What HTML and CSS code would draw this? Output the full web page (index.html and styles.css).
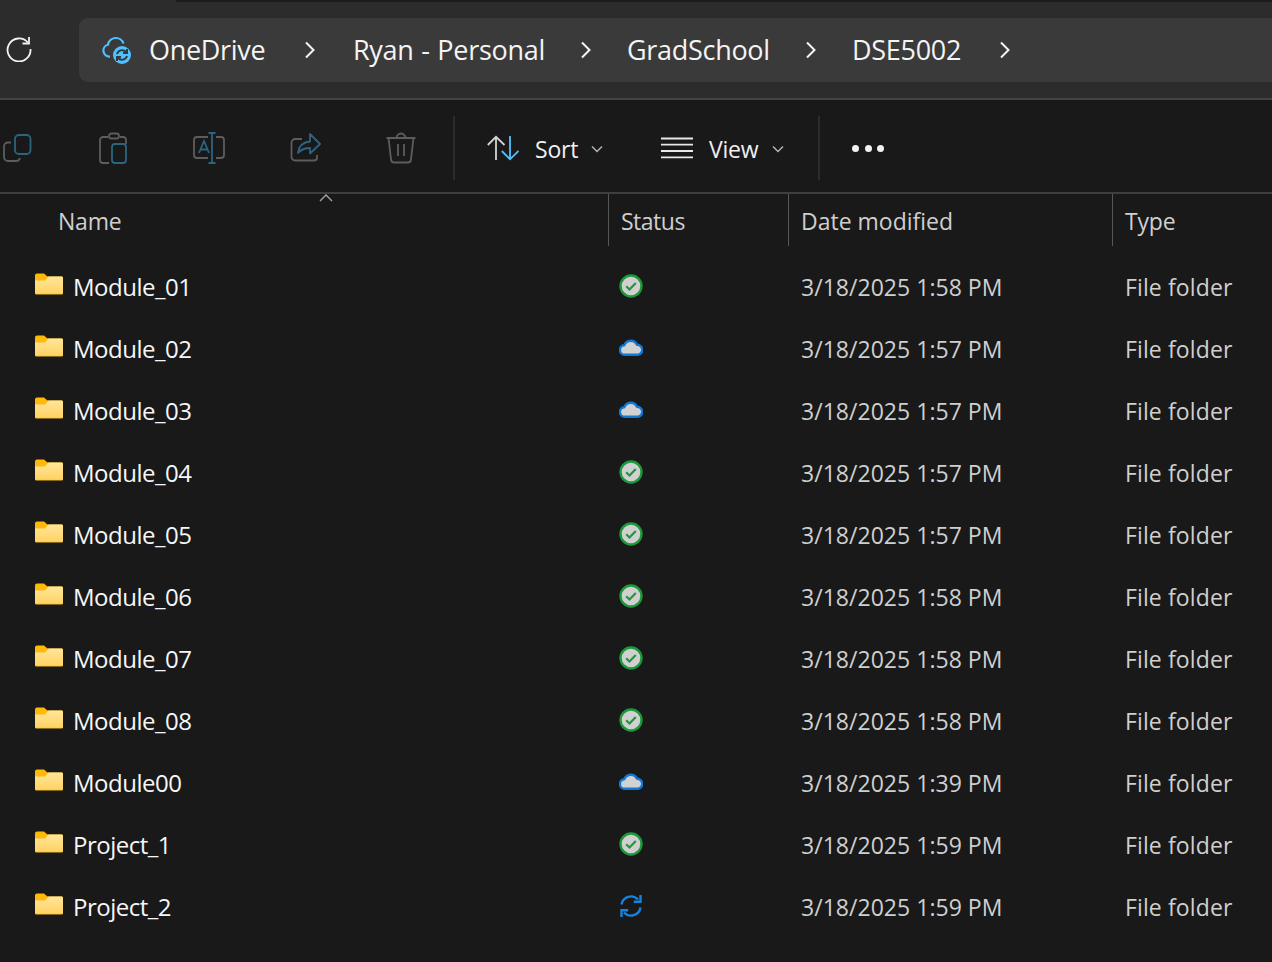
FILE: index.html
```html
<!DOCTYPE html>
<html lang="en">
<head>
<meta charset="utf-8">
<title>DSE5002 - File Explorer</title>
<link rel="stylesheet" href="styles.css">
</head>
<body>
<svg class="defs" width="0" height="0" aria-hidden="true">
  <symbol id="folder" viewBox="0 0 28 22">
    <path d="M0 2.500A2 2 0 0 1 2 .5h7l4 3.500h13.500a1.500 1.500 0 0 1 1.500 1.500v2H0z" fill="#ffb900"/>
    <rect y="3.500" width="28" height="18" rx="1.300" fill="#fdb813"/>
    <path d="M0 7.500 10 7.500 13.500 3.500H26.500a1.500 1.500 0 0 1 1.500 1.500V19.500a1.300 1.300 0 0 1-1.300 1.300H1.300A1.300 1.300 0 0 1 0 19.500z" fill="url(#fg)"/>
    <linearGradient id="fg" x1="0" y1="0" x2="0" y2="1"><stop offset="0" stop-color="#ffe69a"/><stop offset="1" stop-color="#ffd362"/></linearGradient>
  </symbol>
  <symbol id="ok" viewBox="0 0 24 24">
    <circle cx="12" cy="12" r="10.500" fill="#d0d0d0" stroke="#1c9a3a" stroke-width="2.400"/>
    <path d="M7.200 12.300l3.300 3.200 6.300-6.400" fill="none" stroke="#1c9a3a" stroke-width="2.200"/>
  </symbol>
  <symbol id="cloud" viewBox="0 0 24 18">
    <path d="M6 16.800A4.800 4.800 0 0 1 5.400 7.200 6.800 6.800 0 0 1 18 6.800 5 5 0 0 1 18.500 16.800z" fill="#d2d2d2" stroke="#0f78d8" stroke-width="2.400" stroke-linejoin="round"/>
  </symbol>
  <symbol id="sync" viewBox="0 0 24 24">
    <g fill="none" stroke="#1683e0" stroke-width="2.400">
      <path d="M2.500 10.500A9.600 9.600 0 0 1 19 5.500"/>
      <path d="M21.500 1v6.700h-6.700"/>
      <path d="M21.500 13.500A9.600 9.600 0 0 1 5 18.500"/>
      <path d="M2.500 23v-6.700h6.700"/>
    </g>
  </symbol>
  <symbol id="chev" viewBox="0 0 12 18">
    <path d="M2 1.500 9.500 9 2 16.500" fill="none" stroke="#f4f4f4" stroke-width="2"/>
  </symbol>
  <symbol id="caret" viewBox="0 0 12 8">
    <path d="M1 1.500 6 6.500 11 1.500" fill="none" stroke="#b5b5b5" stroke-width="1.500"/>
  </symbol>
</svg>

<div class="app">
  <header class="navbar">
    <div class="topstrip"></div>
    <div class="navrow">
      <svg class="refresh" viewBox="0 0 26 26" width="26" height="26">
        <path d="M21.800 6.500A11.500 11.500 0 1 0 24.500 13" fill="none" stroke="#f2f2f2" stroke-width="1.800"/>
        <path d="M23 1v6.500h-6.500" fill="none" stroke="#f2f2f2" stroke-width="1.800"/>
      </svg>
      <nav class="address">
        <svg class="od" viewBox="0 0 30 28" width="30" height="28">
          <path d="M8 20.500A6 6 0 0 1 6 8.700 8 8 0 0 1 21.500 7.500" fill="none" stroke="#4fc1ff" stroke-width="2.200"/>
          <circle cx="20" cy="19" r="9" fill="#4fc1ff"/>
          <path d="M15 18A5.300 5.300 0 0 1 24 16M25 20A5.300 5.300 0 0 1 16 22" fill="none" stroke="#2f3a42" stroke-width="2"/>
          <path d="M25 13v4h-4M15 25v-4h4" fill="none" stroke="#2f3a42" stroke-width="2"/>
        </svg>
        <span class="crumb c-one">OneDrive</span>
        <svg class="chev"><use href="#chev"/></svg>
        <span class="crumb c-two">Ryan - Personal</span>
        <svg class="chev"><use href="#chev"/></svg>
        <span class="crumb c-three">GradSchool</span>
        <svg class="chev"><use href="#chev"/></svg>
        <span class="crumb c-four">DSE5002</span>
        <svg class="chev"><use href="#chev"/></svg>
      </nav>
    </div>
  </header>

  <section class="toolbar">
    <div class="tools">
      <svg class="tool" viewBox="0 0 32 32">
        <path d="M10 10.500H7a4 4 0 0 0-4 4V25a4 4 0 0 0 4 4h8a4 4 0 0 0 4-3" fill="none" stroke="#5d5d5d" stroke-width="1.800"/>
        <rect x="14" y="3" width="15.500" height="19" rx="4" fill="none" stroke="#2b6580" stroke-width="1.800"/>
      </svg>
      <svg class="tool" viewBox="-1 0 32 32">
        <path d="M10 5H5a3 3 0 0 0-3 3v20a3 3 0 0 0 3 3h6M22 5h3a3 3 0 0 1 3 3v4" fill="none" stroke="#5d5d5d" stroke-width="1.800"/>
        <rect x="11" y="1.500" width="10" height="5" rx="2.500" fill="none" stroke="#5d5d5d" stroke-width="1.800"/>
        <rect x="14" y="12" width="14" height="19" rx="3" fill="none" stroke="#2b6580" stroke-width="1.800"/>
      </svg>
      <svg class="tool" viewBox="0 0 32 32">
        <path d="M15 5H4a3 3 0 0 0-3 3v15a3 3 0 0 0 3 3h11M23 5h5a3 3 0 0 1 3 3v15a3 3 0 0 1-3 3h-5" fill="none" stroke="#5d5d5d" stroke-width="1.800"/>
        <path d="M6 21 11 9l5 12M7.500 17.500h7M19 1v30M15.500 1h7M15.500 31h7" fill="none" stroke="#2b6580" stroke-width="1.800"/>
      </svg>
      <svg class="tool" viewBox="-1 0 32 32">
        <path d="M12 7H5a3.500 3.500 0 0 0-3.500 3.500V25A3.500 3.500 0 0 0 5 28.500h19a3 3 0 0 0 3-3V23" fill="none" stroke="#5d5d5d" stroke-width="1.800"/>
        <path d="M20 2l10 10-10 9.500V16c-6 0-9 1.500-12 5 1-7 5-11 12-11.500z" fill="none" stroke="#2b6580" stroke-width="1.800" stroke-linejoin="round"/>
      </svg>
      <svg class="tool" viewBox="0 0 32 32">
        <path d="M1.500 6h29M11.500 6a4.500 4.500 0 0 1 9 0M3.500 6l2.600 22a3 3 0 0 0 3 2.500h13.800a3 3 0 0 0 3-2.500L28.500 6M13 12v12M19 12v12" fill="none" stroke="#5d5d5d" stroke-width="1.800"/>
      </svg>
    </div>
    <div class="sep"></div>
    <div class="action act-sort">
      <svg class="action-ico" viewBox="0 0 32 32">
        <path d="M9 28V5M.8 13 9 4.800 17.500 13" fill="none" stroke="#d4d4d4" stroke-width="1.800"/>
        <path d="M23 4v23M14.800 19 23 27.300 31.500 19" fill="none" stroke="#4fc1ff" stroke-width="1.800"/>
      </svg>
      <span>Sort</span>
      <svg class="caret"><use href="#caret"/></svg>
    </div>
    <div class="action act-view">
      <svg class="action-ico" viewBox="0 0 32 32">
        <path d="M0 6.500h32M0 12.700h32M0 19h32M0 25.300h32" fill="none" stroke="#e8e8e8" stroke-width="1.800"/>
      </svg>
      <span>View</span>
      <svg class="caret"><use href="#caret"/></svg>
    </div>
    <div class="sep sep-b"></div>
    <div class="dots"><i></i><i></i><i></i></div>
  </section>

  <section class="list">
    <div class="head">
      <div class="hcell h-name">Name<svg class="sortmark" viewBox="0 0 14 8" width="14" height="8"><path d="M1 7 7 1l6 6" fill="none" stroke="#a8a8a8" stroke-width="1.300"/></svg></div>
      <div class="hcell h-status">Status</div>
      <div class="hcell h-date">Date modified</div>
      <div class="hcell">Type</div>
    </div>

    <div class="row"><div class="c-name"><svg class="folder"><use href="#folder"/></svg><span>Module_01</span></div><div class="c-status"><svg class="st"><use href="#ok"/></svg></div><div class="c-meta">3/18/2025 1:58 PM</div><div class="c-meta c-type">File folder</div></div>
    <div class="row"><div class="c-name"><svg class="folder"><use href="#folder"/></svg><span>Module_02</span></div><div class="c-status"><svg class="st st-cloud"><use href="#cloud"/></svg></div><div class="c-meta">3/18/2025 1:57 PM</div><div class="c-meta c-type">File folder</div></div>
    <div class="row"><div class="c-name"><svg class="folder"><use href="#folder"/></svg><span>Module_03</span></div><div class="c-status"><svg class="st st-cloud"><use href="#cloud"/></svg></div><div class="c-meta">3/18/2025 1:57 PM</div><div class="c-meta c-type">File folder</div></div>
    <div class="row"><div class="c-name"><svg class="folder"><use href="#folder"/></svg><span>Module_04</span></div><div class="c-status"><svg class="st"><use href="#ok"/></svg></div><div class="c-meta">3/18/2025 1:57 PM</div><div class="c-meta c-type">File folder</div></div>
    <div class="row"><div class="c-name"><svg class="folder"><use href="#folder"/></svg><span>Module_05</span></div><div class="c-status"><svg class="st"><use href="#ok"/></svg></div><div class="c-meta">3/18/2025 1:57 PM</div><div class="c-meta c-type">File folder</div></div>
    <div class="row"><div class="c-name"><svg class="folder"><use href="#folder"/></svg><span>Module_06</span></div><div class="c-status"><svg class="st"><use href="#ok"/></svg></div><div class="c-meta">3/18/2025 1:58 PM</div><div class="c-meta c-type">File folder</div></div>
    <div class="row"><div class="c-name"><svg class="folder"><use href="#folder"/></svg><span>Module_07</span></div><div class="c-status"><svg class="st"><use href="#ok"/></svg></div><div class="c-meta">3/18/2025 1:58 PM</div><div class="c-meta c-type">File folder</div></div>
    <div class="row"><div class="c-name"><svg class="folder"><use href="#folder"/></svg><span>Module_08</span></div><div class="c-status"><svg class="st"><use href="#ok"/></svg></div><div class="c-meta">3/18/2025 1:58 PM</div><div class="c-meta c-type">File folder</div></div>
    <div class="row"><div class="c-name"><svg class="folder"><use href="#folder"/></svg><span>Module00</span></div><div class="c-status"><svg class="st st-cloud"><use href="#cloud"/></svg></div><div class="c-meta">3/18/2025 1:39 PM</div><div class="c-meta c-type">File folder</div></div>
    <div class="row"><div class="c-name"><svg class="folder"><use href="#folder"/></svg><span>Project_1</span></div><div class="c-status"><svg class="st"><use href="#ok"/></svg></div><div class="c-meta">3/18/2025 1:59 PM</div><div class="c-meta c-type">File folder</div></div>
    <div class="row"><div class="c-name"><svg class="folder"><use href="#folder"/></svg><span>Project_2</span></div><div class="c-status"><svg class="st"><use href="#sync"/></svg></div><div class="c-meta">3/18/2025 1:59 PM</div><div class="c-meta c-type">File folder</div></div>
  </section>
</div>
</body>
</html>
```
FILE: styles.css
```css
* { box-sizing: border-box; }
html, body { margin: 0; height: 100%; }
body {
  background: #191919;
  color: #fff;
  font-family: "Open Sans", "Noto Sans", "Liberation Sans", sans-serif;
  overflow: hidden;
}
.defs { position: absolute; }
.app { width: 1272px; height: 962px; overflow: hidden; }

.navbar {
  height: 100px;
  background: #2c2c2c;
  border-bottom: 2px solid #434343;
}
.topstrip {
  height: 2px;
  margin-left: 176px;
  background: #1c1c1c;
  border-bottom-left-radius: 4px;
}
.navrow {
  display: flex;
  align-items: center;
  height: 96px;
}
.refresh { margin-left: 6px; margin-right: 47px; margin-top: -3px; flex: none; }
.address {
  flex: 1;
  height: 64px;
  background: #3a3a3a;
  border-radius: 9px 0 0 9px;
  display: flex;
  align-items: center;
  padding-left: 23px;
}
.od { flex: none; margin-right: 17px; }
.crumb { font-size: 27px; color: #f4f4f4; white-space: nowrap; letter-spacing: -.3px; margin-bottom: 2px; }
.chev { width: 12px; height: 18px; flex: none; }
.c-one { width: 155px; }
.c-two { width: 227px; margin-left: 37px; word-spacing: 1px; }
.c-three { width: 178px; margin-left: 35px; }
.c-four { width: 147px; margin-left: 35px; }

.toolbar {
  height: 94px;
  padding-top: 4px;
  display: flex;
  align-items: center;
  background: #191919;
  border-bottom: 2px solid #3e3e3e;
}
.tools {
  display: flex;
  gap: 64px;
  margin-left: 1px;
  flex: none;
}
.tool { width: 32px; height: 32px; flex: none; }
.sep { width: 2px; height: 64px; background: #2c2c2c; margin-left: 36px; flex: none; }
.action {
  display: flex;
  align-items: center;
  font-size: 23px;
  color: #f0f0f0;
  letter-spacing: -.2px;
  flex: none;
}
.action span { margin-top: 2px; }
.action-ico { width: 32px; height: 32px; margin-right: 16px; flex: none; }
.caret { width: 12px; height: 8px; flex: none; margin-left: 13px; margin-top: 2px; }
.act-sort { margin-left: 32px; width: 174px; }
.act-view { width: 125px; }
.act-view .caret { margin-left: 14px; }
.sep-b { margin-left: 32px; }
.dots { display: flex; gap: 5.5px; margin-left: 32px; flex: none; }
.dots i { width: 7px; height: 7px; border-radius: 50%; background: #f2f2f2; display: block; }

.list { display: block; }
.head, .row {
  display: grid;
  grid-template-columns: 608px 180px 324px 160px;
}
.head { height: 52px; }
.hcell {
  display: flex;
  align-items: center;
  padding-left: 12px;
  padding-top: 1px;
  font-size: 23px;
  color: #cfcfcf;
  letter-spacing: -.2px;
  border-left: 1px solid #565656;
  height: 52px;
  position: relative;
}
.h-name { border-left: 0; padding-left: 58px; }
.h-status { letter-spacing: -.5px; }
.h-date { letter-spacing: 0; }
.sortmark { position: absolute; left: 319px; top: 0; }

.row {
  height: 62px;
  align-items: center;
}
.head + .row { margin-top: 10px; }
.c-name {
  display: flex;
  align-items: center;
  padding-left: 35px;
  font-size: 24px;
  color: #f6f6f6;
  letter-spacing: -.5px;
}
.c-name span { margin-bottom: 2px; }
.folder { width: 28px; height: 22px; flex: none; margin: -6px 10px 0 0; }
.c-status { display: flex; padding-left: 11px; margin-top: -2px; }
.st { width: 24px; height: 24px; display: block; }
.st-cloud { height: 18px; margin-top: -2px; }
.c-meta {
  padding-left: 13px;
  font-size: 23px;
  color: #cfcfcf;
  letter-spacing: .03px;
  white-space: nowrap;
}
.c-type { letter-spacing: .12px; }
```
